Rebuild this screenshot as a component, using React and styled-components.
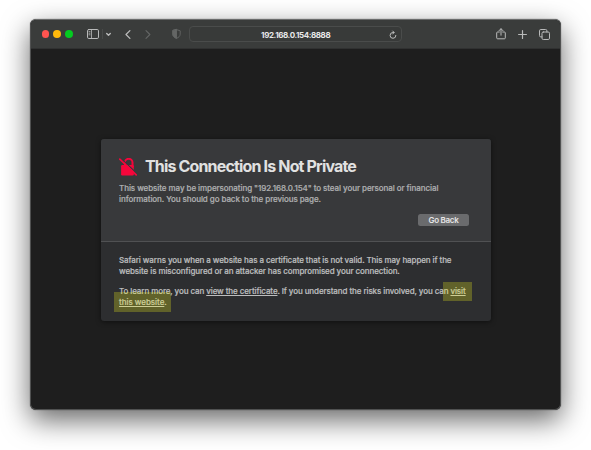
import React from "react";
import styled, { createGlobalStyle } from "styled-components";

const GlobalStyle = createGlobalStyle`
  *, *::before, *::after { box-sizing: border-box; }
  html, body { margin: 0; padding: 0; }
  body {
    background: #fff;
    overflow: hidden;
    font-family: Inter, "Liberation Sans", sans-serif;
  }
`;

const Desktop = styled.div`
  width: 591px;
  height: 450px;
  padding: 19px 30px 40px;
`;

const Window = styled.main`
  width: 531px;
  height: 391px;
  display: flex;
  flex-direction: column;
  border-radius: 6px;
  overflow: hidden;
  background: #1e1e1e;
  border: 1px solid #505151;
  border-top-color: #6b6c6c;
  box-shadow: 0 0 1px rgba(0, 0, 0, 0.8), 0 10px 28px rgba(0, 0, 0, 0.6);
`;

const Toolbar = styled.header`
  flex: none;
  height: 29px;
  display: flex;
  align-items: center;
  padding: 0 10.5px 0 10.5px;
  background: #3a3c3b;
  border-bottom: 1px solid #303131;
`;

const TrafficLights = styled.div`
  display: flex;
  gap: 3.9px;
  margin-right: 14px;
`;

const Light = styled.span`
  width: 7.8px;
  height: 7.8px;
  border-radius: 50%;
  background: ${(p) => p.$color};
`;

const IconButton = styled.button`
  flex: none;
  display: flex;
  align-items: center;
  justify-content: center;
  width: ${(p) => p.$width}px;
  height: 16px;
  margin: 0 ${(p) => p.$after || 0}px 0 0;
  padding: 0;
  border: 0;
  background: none;
  color: ${(p) => (p.$dim ? "#646665" : "#b9baba")};
`;

const Separator = styled.span`
  width: 1px;
  height: 10px;
  margin-right: 3px;
  background: #484a49;
`;

const AddressBar = styled.div`
  flex: none;
  width: 213px;
  height: 16px;
  display: grid;
  grid-template-columns: 13px 1fr 13px;
  align-items: center;
  border: 1px solid #4a4c4b;
  border-radius: 4px;
  background: #383a39;
`;

const Address = styled.span`
  grid-column: 2;
  text-align: center;
  font-size: 8px;
  line-height: 14px;
  font-weight: 700;
  letter-spacing: ${(p) => p.$tracking}px;
  color: #e9e9e9;
`;

const Actions = styled.div`
  display: flex;
  align-items: center;
  margin-left: auto;
`;

const Icon = styled.svg`
  display: block;
  overflow: visible;
  fill: none;
  stroke: currentColor;
  stroke-width: ${(p) => p.$weight || 1};
  stroke-linecap: round;
  stroke-linejoin: round;
`;

const Viewport = styled.div`
  flex: 1;
  padding: 90px 0 0 69.5px;
`;

const Card = styled.section`
  width: 390px;
  height: 182px;
  display: flex;
  flex-direction: column;
  border-radius: 3px;
  background: #2d2e30;
  box-shadow: 0 1px 5px rgba(0, 0, 0, 0.5);
`;

const Warning = styled.div`
  height: 103px;
  padding: 17px 21.5px 0 18.5px;
  border-radius: 3px 3px 0 0;
  border-bottom: 1px solid #505153;
  background: #38393b;
`;

const Heading = styled.div`
  display: flex;
  align-items: center;
  height: 21px;
  gap: 7px;
  margin-bottom: 6px;
`;

const Title = styled.h1`
  margin: 0;
  font-size: 16px;
  line-height: 21px;
  font-weight: 700;
  letter-spacing: ${(p) => p.$tracking}px;
  white-space: nowrap;
  color: #e1e1e1;
`;

const Line = styled.span`
  display: block;
  height: 11.1px;
  letter-spacing: ${(p) => p.$tracking}px;
`;

const Paragraph = styled.p`
  margin: 0 0 ${(p) => p.$after || 0}px;
  font-size: 8px;
  line-height: 11.1px;
  font-weight: 500;
  -webkit-text-stroke: 0.2px currentColor;
  white-space: nowrap;
  color: ${(p) => (p.$soft ? "#aeafb0" : "#bcbdbe")};
`;

const ButtonRow = styled.div`
  display: flex;
  justify-content: flex-end;
`;

const GoBack = styled.button`
  width: 51px;
  height: 12px;
  padding: 0;
  border: 0;
  border-radius: 2.5px;
  background: #6a6b6d;
  color: #e6e6e6;
  font: 600 8px/12px Inter, "Liberation Sans", sans-serif;
  letter-spacing: ${(p) => p.$tracking}px;
`;

const Details = styled.div`
  padding: 13.4px 18.5px 0;
`;

const Link = styled.a`
  text-decoration: underline;
  text-decoration-thickness: 1px;
  text-underline-offset: 1px;
`;

const Marked = styled.span`
  position: relative;
`;

const Highlight = styled.span`
  position: absolute;
  left: ${(p) => p.$left}px;
  top: ${(p) => p.$top}px;
  width: ${(p) => p.$width}px;
  height: ${(p) => p.$height}px;
  background: rgba(255, 255, 24, 0.25);
  pointer-events: none;
`;

const LockSlash = () => (
  <svg width="19" height="18" viewBox="0 0 19 18">
    <path d="M5.9 8V4.6a3.700 3.700 0 0 1 7.600 0V9" fill="none" stroke="#f5063b" strokeWidth="2" />
    <rect x="2.1" y="7" width="12.700" height="10.500" rx="1.200" fill="#f5063b" />
    <path d="M1.700 0 19 16.500" stroke="#38393b" strokeWidth="1.200" />
    <path d="M0.800 1.200 17.200 16.900" stroke="#f5063b" strokeWidth="1.700" strokeLinecap="round" />
  </svg>
);

export default function App() {
  return (
    <>
      <GlobalStyle />
      <Desktop>
        <Window>
          <Toolbar>
            <TrafficLights>
              <Light $color="#ff5450" />
              <Light $color="#ffb90b" />
              <Light $color="#04cb20" />
            </TrafficLights>
            <IconButton $width={12} $after={3} aria-label="Sidebar">
              <Icon width="12" height="10" viewBox="0 0 12 10">
                <rect x="0.5" y="0.5" width="11" height="9" rx="1.3" />
                <path d="M4.5 .5v9M2 2.6h1M2 4.2h1M2 5.8h1" strokeWidth=".8" />
              </Icon>
            </IconButton>
            <Separator />
            <IconButton $width={5} $after={14} aria-label="Tab groups">
              <Icon width="5" height="3" viewBox="0 0 5 3" $weight={1.4}>
                <path d="M.7 .5 2.5 2.2 4.3 .5" />
              </Icon>
            </IconButton>
            <IconButton $width={6} $after={14.5} aria-label="Back">
              <Icon width="6" height="9" viewBox="0 0 6 9" $weight={1.3}>
                <path d="M4.9 .6 1 4.5l3.9 3.9" />
              </Icon>
            </IconButton>
            <IconButton $width={6} $after={20.5} $dim aria-label="Forward">
              <Icon width="6" height="9" viewBox="0 0 6 9" $weight={1.1}>
                <path d="M1 .6l3.9 3.9L1 8.4" />
              </Icon>
            </IconButton>
            <IconButton $width={9} $after={8.5} $dim aria-label="Privacy report">
              <Icon width="9" height="10" viewBox="0 0 9 10" $weight={0.9}>
                <path d="M4.5 .6 8.2 1.8v3.4c0 1.8-1.5 3.2-3.7 4.2C2.3 8.4.8 7 .8 5.2V1.8z" />
                <path d="M4.5.6v8.8C2.3 8.4.8 7 .8 5.2V1.8z" fill="currentColor" />
              </Icon>
            </IconButton>
            <AddressBar>
              <Address $tracking={-0.4}>192.168.0.154:8888</Address>
              <IconButton $width={10} aria-label="Reload">
                <Icon width="8" height="8" viewBox="0 0 8 8" $weight={1}>
                  <path d="M6.9 4.4A2.9 2.9 0 1 1 4 1.5h.8" />
                  <path d="M3.7 0 5.2 1.5 3.7 3" />
                </Icon>
              </IconButton>
            </AddressBar>
            <Actions>
              <IconButton $width={10} $after={11.5} aria-label="Share">
                <Icon width="10" height="12" viewBox="0 0 10 12">
                  <path d="M3.3 4H1.6a.9.9 0 0 0-.9.9v5a.9.9 0 0 0 .9.9h6.8a.9.9 0 0 0 .9-.9v-5a.9.9 0 0 0-.9-.9H6.7M5 7.2V.9M3 2.7 5 .7l2 2" />
                </Icon>
              </IconButton>
              <IconButton $width={9} $after={12} aria-label="New tab">
                <Icon width="9" height="9" viewBox="0 0 9 9" $weight={1.2}>
                  <path d="M4.5.6v7.8M.6 4.5h7.8" />
                </Icon>
              </IconButton>
              <IconButton $width={11} aria-label="Tab overview">
                <Icon width="11" height="11" viewBox="0 0 11 11">
                  <rect x="3" y="3" width="7.5" height="7.5" rx="1.3" />
                  <path d="M3 7.9H1.8A1.3 1.3 0 0 1 .5 6.6V1.8A1.3 1.3 0 0 1 1.8.5h4.8a1.3 1.3 0 0 1 1.3 1.3V3" />
                </Icon>
              </IconButton>
            </Actions>
          </Toolbar>
          <Viewport>
            <Card>
              <Warning>
                <Heading>
                  <LockSlash />
                  <Title $tracking={-0.84}>This Connection Is Not Private</Title>
                </Heading>
                <Paragraph $soft $after={8.8}>
                  <Line $tracking={-0.07}>
                    This website may be impersonating "192.168.0.154" to steal your personal or financial
                  </Line>
                  <Line $tracking={-0.08}>information. You should go back to the previous page.</Line>
                </Paragraph>
                <ButtonRow>
                  <GoBack $tracking={-0.3}>Go Back</GoBack>
                </ButtonRow>
              </Warning>
              <Details>
                <Paragraph $after={8}>
                  <Line $tracking={-0.095}>
                    Safari warns you when a website has a certificate that is not valid. This may happen if the
                  </Line>
                  <Line $tracking={-0.09}>
                    website is misconfigured or an attacker has compromised your connection.
                  </Line>
                </Paragraph>
                <Paragraph>
                  <Line $tracking={-0.1}>
                    To learn more, you can <Link>view the certificate</Link>. If you understand the risks
                    involved, you can{" "}
                    <Marked>
                      <Link>visit</Link>
                      <Highlight $left={-7} $top={-3.5} $width={28.5} $height={18.5} />
                    </Marked>
                  </Line>
                  <Line $tracking={-0.04}>
                    <Marked>
                      <Link>this website</Link>.
                      <Highlight $left={-5.5} $top={-4.5} $width={57} $height={19.5} />
                    </Marked>
                  </Line>
                </Paragraph>
              </Details>
            </Card>
          </Viewport>
        </Window>
      </Desktop>
    </>
  );
}
